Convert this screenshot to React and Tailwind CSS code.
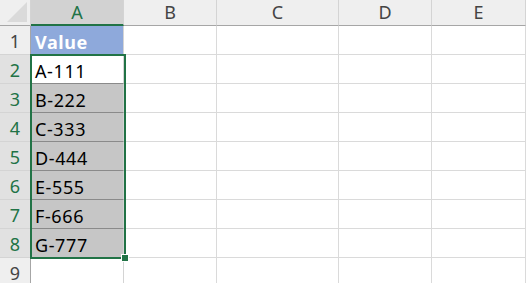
const columns = [
  { key: "A", width: "w-[93px]" },
  { key: "B", width: "w-[93px]" },
  { key: "C", width: "w-[122px]" },
  { key: "D", width: "w-[93px]" },
  { key: "E", width: "w-[94px]" },
];

const values = ["Value", "A-111", "B-222", "C-333", "D-444", "E-555", "F-666", "G-777"];

const font = { fontFamily: '"Noto Sans", "Liberation Sans", sans-serif' };

const CornerCell = () => (
  <div className="flex h-[26px] w-[31px] shrink-0 items-end justify-end border-r border-b border-r-[#d4d4d4] border-b-[#a6a6a6] bg-[#efefef] p-[3px]">
    <svg width="20" height="20" viewBox="0 0 20 20">
      <polygon points="20,0 20,20 0,20" fill="#dadada" />
    </svg>
  </div>
);

const ColumnHeader = ({ col }) => {
  const active = col.key === "A";

  return (
    <div
      className={`flex h-[26px] shrink-0 items-center justify-center border-r border-r-[#d4d4d4] text-[18px] ${col.width} ${
        active
          ? "border-b-2 border-b-[#217346] bg-[#d2d2d2] text-[#217346]"
          : "border-b border-b-[#a6a6a6] bg-[#efefef] text-[#444444]"
      }`}
    >
      {col.key}
    </div>
  );
};

const Row = ({ number }) => {
  const selected = number >= 2 && number <= 8;
  const value = values[number - 1];

  let cellA = "bg-white border-b-[#d4d4d4]";
  if (number === 1) cellA = "bg-[#8ea9db] text-white font-bold border-b-[#d4d4d4]";
  if (number === 2) cellA = "bg-white border-b-[#8a8a8a]";
  if (number > 2 && number <= 8) cellA = "bg-[#c6c6c6] border-b-[#8a8a8a]";

  return (
    <div className="flex h-[29px]">
      <div
        className={`flex w-[31px] shrink-0 items-center justify-center border-r border-b border-r-[#a6a6a6] border-b-[#d4d4d4] pt-[3px] text-[18px] ${
          selected ? "bg-[#e1e1e1] text-[#217346]" : "bg-[#efefef] text-[#444444]"
        }`}
      >
        {number}
      </div>
      <div
        className={`flex w-[93px] shrink-0 items-center border-r border-b border-r-[#d4d4d4] pt-[5px] pl-[4px] text-[18px] tracking-[0.6px] text-black ${cellA}`}
      >
        {value}
      </div>
      {columns.slice(1).map((col) => (
        <div
          key={col.key}
          className={`shrink-0 border-r border-b border-[#dadada] bg-white ${col.width}`}
        />
      ))}
    </div>
  );
};

const App = () => {
  const rows = [1, 2, 3, 4, 5, 6, 7, 8, 9];

  return (
    <div className="relative h-[283px] w-[526px] overflow-hidden bg-white" style={font}>
      <div className="flex">
        <CornerCell />
        {columns.map((col) => (
          <ColumnHeader key={col.key} col={col} />
        ))}
      </div>

      {rows.map((number) => (
        <Row key={number} number={number} />
      ))}

      {/* selection A2:A8 */}
      <div className="absolute top-[54px] left-[30px] h-[205px] w-[96px] border-2 border-[#217346]" />
      <div className="absolute top-[254px] left-[121px] h-[8px] w-[8px] border border-white bg-[#217346]" />
    </div>
  );
};

export default App;
